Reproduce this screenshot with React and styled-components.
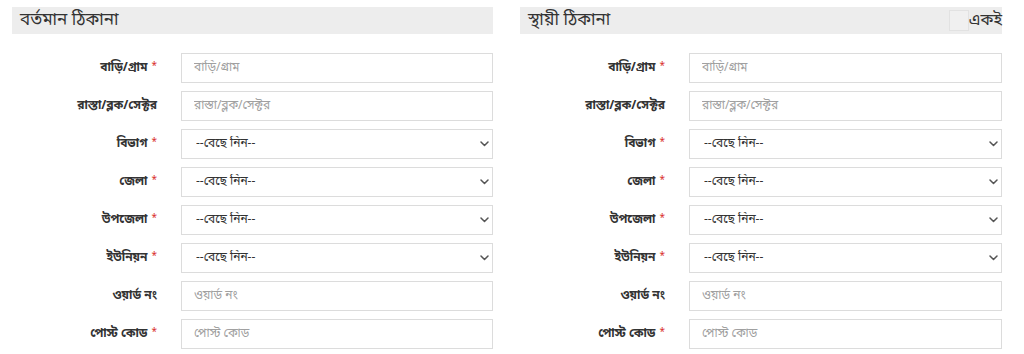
import React from 'react';
import styled, { createGlobalStyle } from 'styled-components';

const GlobalStyle = createGlobalStyle`
  html, body {
    margin: 0;
    padding: 0;
    background: #fff;
  }
  body {
    font-family: "Noto Sans Bengali", "Noto Sans", "Liberation Sans", sans-serif;
    color: #333;
  }
  * { box-sizing: border-box; }
`;

const fields = [
  { label: 'বাড়ি/গ্রাম', type: 'input', required: true },
  { label: 'রাস্তা/ব্লক/সেক্টর', type: 'input', required: false },
  { label: 'বিভাগ', type: 'select', required: true },
  { label: 'জেলা', type: 'select', required: true },
  { label: 'উপজেলা', type: 'select', required: true },
  { label: 'ইউনিয়ন', type: 'select', required: true },
  { label: 'ওয়ার্ড নং', type: 'input', required: false },
];

function Chevron() {
  return (
    <svg width="9" height="6" viewBox="0 0 9 6">
      <path d="M1 1l3.5 3.5L8 1" fill="none" stroke="#555" strokeWidth="1.5" strokeLinecap="round" strokeLinejoin="round" />
    </svg>
  );
}

function AddressBlock({ title, postRequired, withSame }) {
  const list = [...fields, { label: 'পোস্ট কোড', type: 'input', required: postRequired }];
  return (
    <Column>
      <Header>
        <h3>{title}</h3>
        {withSame && (
          <Same>
            <Box />
            <span>একই</span>
          </Same>
        )}
      </Header>
      <Rows>
        {list.map((f) => (
          <Row key={f.label}>
            <Label>
              {f.label}
              {f.required && <Star>*</Star>}
            </Label>
            {f.type === 'input' ? (
              <Input placeholder={f.label} />
            ) : (
              <SelectWrap>
                <Select defaultValue="">
                  <option value="">--বেছে নিন--</option>
                </Select>
                <Arrow><Chevron /></Arrow>
              </SelectWrap>
            )}
          </Row>
        ))}
      </Rows>
    </Column>
  );
}

export default function App() {
  return (
    <>
      <GlobalStyle />
      <Page>
        <AddressBlock title="বর্তমান ঠিকানা" postRequired />
        <AddressBlock title="স্থায়ী ঠিকানা" postRequired withSame />
      </Page>
    </>
  );
}

const Page = styled.div`
  display: grid;
  grid-template-columns: 481px 482px;
  column-gap: 27px;
  padding: 7px 0 0 12px;
`;

const Column = styled.div`
  display: flex;
  flex-direction: column;
`;

const Header = styled.div`
  display: flex;
  align-items: center;
  justify-content: space-between;
  height: 27px;
  background: #ededed;
  padding: 0 0 0 8px;

  h3 {
    margin: 0;
    font-size: 17px;
    font-weight: 400;
    color: #333;
  }
`;

const Same = styled.label`
  display: flex;
  align-items: center;
  font-size: 16px;
  color: #333;
`;

const Box = styled.span`
  width: 20px;
  height: 21px;
  border: 1px solid #e2e2e2;
  background: #f0f0f0;
`;

const Rows = styled.div`
  display: flex;
  flex-direction: column;
  gap: 8px;
  padding-top: 19px;
`;

const Row = styled.div`
  display: grid;
  grid-template-columns: 169px 1fr;
  align-items: center;
`;

const Label = styled.label`
  text-align: right;
  padding-right: 24px;
  font-size: 12px;
  font-weight: 700;
  color: #333;
`;

const Star = styled.span`
  margin-left: 4px;
  font-size: 10px;
  font-weight: 400;
  vertical-align: 2px;
  color: #d9302c;
`;

const fieldBase = `
  width: 100%;
  height: 30px;
  border: 1px solid #dcdcdc;
  background: #fff;
  font-family: inherit;
  font-size: 12px;
  outline: none;
`;

const Input = styled.input`
  ${fieldBase}
  padding: 0 12px;
  color: #333;

  &::placeholder {
    color: #a0a0a0;
  }
`;

const SelectWrap = styled.div`
  position: relative;
`;

const Select = styled.select`
  ${fieldBase}
  appearance: none;
  padding: 0 28px 0 14px;
  color: #333;
`;

const Arrow = styled.span`
  position: absolute;
  right: 4px;
  top: 12px;
  display: flex;
  pointer-events: none;
`;
